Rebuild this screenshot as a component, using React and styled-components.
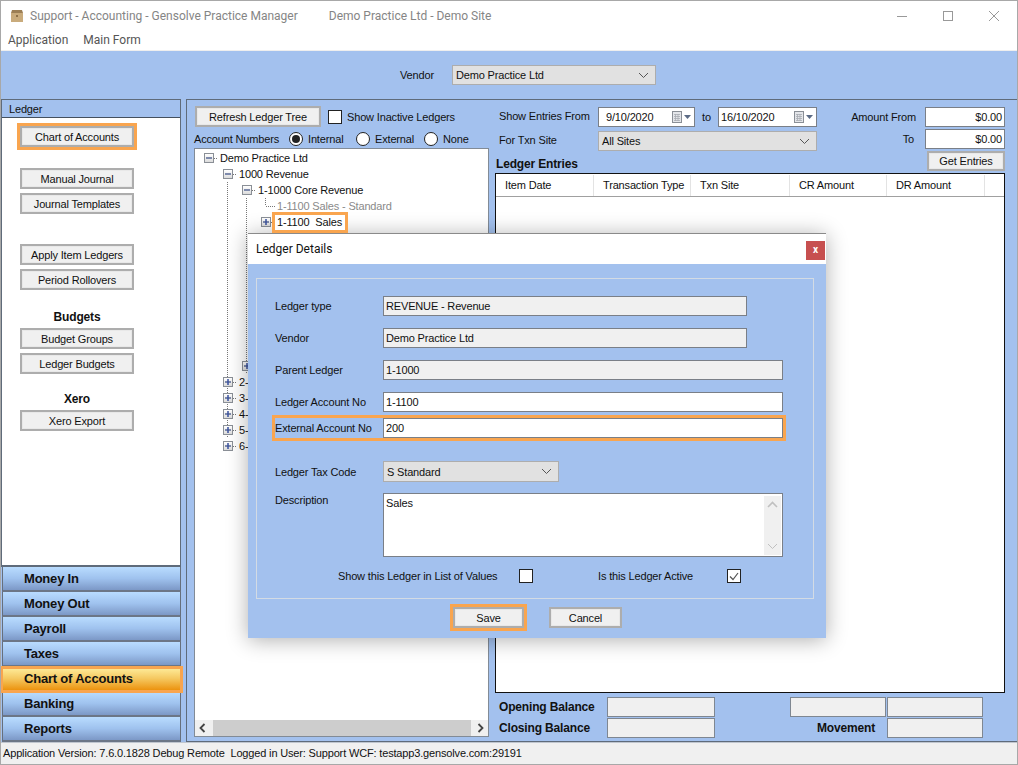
import React from "react";
import styled, { createGlobalStyle, css } from "styled-components";

const Global = createGlobalStyle`
  html, body { margin: 0; padding: 0; background: #fff; }
  body { font-family: "Liberation Sans", Arial, sans-serif; font-size: 11px; letter-spacing: -0.16px; color: #111; }
  * { box-sizing: border-box; }
`;

const BLUE = "#a3c1ee";
const ORANGE = "#f9a54f";
const highlight = css`outline: 3px solid ${ORANGE};`;

const Win = styled.div`
  position: relative; width: 1018px; height: 765px; overflow: hidden;
  display: flex; flex-direction: column;
  border: 1px solid #a8a8a8; background: ${BLUE};
`;
const TitleBar = styled.div`
  height: 29px; background: #fff; display: flex; align-items: center; font-family: Roboto, sans-serif; font-size: 12px; letter-spacing: 0;
  color: #858585; padding-left: 9px; padding-top: 1px; flex: none;
`;
const TitleText = styled.span`margin-left: ${p => p.$gap}px; white-space: nowrap;`;
const WinControls = styled.div`margin-left: auto; display: flex;`;
const WinBtn = styled.div`width: 46px; height: 29px; display: flex; align-items: center; justify-content: center; margin-top: -1px;`;
const MenuBar = styled.div`
  height: 21px; background: #fff; border-bottom: 1px solid #eee; display: flex; gap: 15px; font-family: Roboto, sans-serif; font-size: 12px; letter-spacing: 0;
  align-items: center; padding: 0 0 1px 7px; color: #555; flex: none;
`;
const VendorBar = styled.div`
  height: 48px; display: flex; align-items: center; flex: none; padding: 0 0 0 399px;
`;
const VendorLabel = styled.span`width: 52px;`;
const Main = styled.div`flex: 1; display: flex; min-height: 0;`;

const Sidebar = styled.div`width: 180px; flex: none; display: flex; flex-direction: column; margin-right: 5px;`;
const SideBody = styled.div`flex: 1; border: 1px solid #5f6b7a; border-bottom: 2px solid #5f6b7a; background: #fff; display: flex; flex-direction: column;`;
const SideHeader = styled.div`height: 18px; background: ${BLUE}; border-bottom: 1px solid #44505e; padding-left: 7px; line-height: 18px; flex: none;`;
const SideGroup = styled.div`display: flex; flex-direction: column; gap: 4px; padding-left: 18px; margin-top: ${p => p.$top}px;`;
const GroupLabel = styled.div`width: 114px; height: 16px; margin-bottom: -1px; text-align: center; font-weight: 700; font-size: 12px; line-height: 17px;`;

const Btn = styled.div`
  width: ${p => p.$w}px; height: ${p => p.$h || 21}px; flex: none;
  border: 2px solid #adadad; background: #f0f0f0;
  box-shadow: inset 0 0 0 1px #e8e8e8;
  display: flex; align-items: center; justify-content: center; white-space: nowrap;
  ${p => p.$hl && highlight}
`;

const NavList = styled.div`display: flex; flex-direction: column; padding-left: 1px; position: relative;`;
const NavItem = styled.div`
  height: 25px; position: relative; padding-left: 21px; font-weight: 700; font-size: 13px; letter-spacing: -0.2px; line-height: 23px;
  border: 1px solid #666f7c; border-top: 0; border-bottom: 2px solid #6c7686;
  background: ${p => p.$active
    ? "linear-gradient(#fff0a0, #f5c860 50%, #ec930f)"
    : "linear-gradient(#b9dcff, #9fc2ee 50%, #7c98c6)"};
  ${p => p.$active && css`
    border-color: #ec930f; z-index: 1;
    outline: 3px solid ${ORANGE}; outline-offset: -2px;
    margin: 0 -1px 0 -1px; padding-left: 22px;
  `}
`;

const Panel = styled.div`flex: 1; display: flex; border: 1px solid #5f6b7a; border-right: 0; min-width: 0;`;
const TreeCol = styled.div`width: 308px; flex: none; padding: 6px 0 4px 7px; display: flex; flex-direction: column;`;
const TreeTop = styled.div`display: flex; align-items: center; padding-left: 1px;`;
const CheckBox = styled.div`
  width: 14px; height: 14px; flex: none; border: 1px solid #222; background: #fff;
  display: flex; align-items: center; justify-content: center;
`;
const TopLabel = styled.span`margin-left: ${p => p.$ml}px; white-space: nowrap;`;
const RadioRow = styled.div`display: flex; align-items: center; height: 18px; margin-top: 3px;`;
const RadioMain = styled.span`width: 95px; flex: none; white-space: nowrap;`;
const RadioOpt = styled.div`display: flex; align-items: center; width: ${p => p.$w}px; flex: none; gap: 5px; white-space: nowrap;`;
const Radio = styled.div`
  width: 14px; height: 14px; border-radius: 50%; border: 1px solid #222; background: #fff; flex: none;
  display: flex; align-items: center; justify-content: center;
  &::after { content: ""; width: 8px; height: 8px; border-radius: 50%; background: ${p => p.$on ? "#222" : "transparent"}; }
`;
const TreeBox = styled.div`
  flex: 1; width: 295px; min-height: 0; border: 1px solid #828b96; background: #fff;
  display: flex; flex-direction: column; padding-top: 1px; overflow: hidden;
`;
const TreeRows = styled.div`flex: 1; padding-left: 4px; min-height: 0; overflow: hidden;`;
const TreeRow = styled.div`height: 16px; display: flex; align-items: center; white-space: nowrap;`;
const dots = "repeating-linear-gradient(#777 0 1px, transparent 1px 2px)";
const Cell = styled.div`
  width: 19px; height: 16px; flex: none; position: relative;
  ${p => p.$line && css`
    background-image: ${dots}; background-size: 1px 100%; background-repeat: no-repeat; background-position: 9px 0;
  `}
`;
const Leaf = styled(Cell)`
  background-image: ${dots}, repeating-linear-gradient(90deg, #777 0 1px, transparent 1px 2px);
  background-size: 1px 8px, 9px 1px; background-repeat: no-repeat; background-position: 9px 0, 10px 8px;
`;
const Exp = styled(Cell)`
  display: flex; align-items: center; justify-content: flex-start; padding-left: 5px;
  &::after {
    content: ""; position: absolute; left: 15px; top: 8px; width: 4px; height: 1px;
    background: repeating-linear-gradient(90deg, #777 0 1px, transparent 1px 2px);
  }
`;
const ExpBox = styled.div`
  width: 10px; height: 10px; border: 1px solid #8a8f96; background: linear-gradient(#fff, #dcdcdc);
  position: relative;
  &::before { content: ""; position: absolute; left: 1px; top: 3px; width: 6px; height: 2px; background: #5a6a96; transform: scaleY(.75); }
  ${p => p.$plus && css`
    &::after { content: ""; position: absolute; left: 3px; top: 1px; width: 2px; height: 6px; background: #3a52a0; transform: scaleX(.75); }
  `}
`;
const NodeText = styled.span`
  padding-left: 2px; color: ${p => p.$dim ? "#8a8a8a" : "#111"};
  ${p => p.$hl && css`${highlight}; padding: 0 3px 0 2px; height: 15px; line-height: 15px; white-space: pre; background: #fff; position: relative; z-index: 1;`}
`;
const HScroll = styled.div`
  height: 16px; flex: none; background: #f0f0f0; display: flex; align-items: center; justify-content: space-between;
  padding: 0 4px; position: relative;
`;
const HThumb = styled.div`position: absolute; left: 18px; right: 17px; top: 0; bottom: 0; background: #cdcdcd;`;

const EntriesCol = styled.div`flex: 1; display: flex; flex-direction: column; min-width: 0; padding-right: 12px;`;
const FilterArea = styled.div`display: flex; padding: 7px 0 0 4px; height: 73px; flex: none;`;
const FilterLeft = styled.div`width: 318px; display: flex; flex-direction: column; gap: 4px;`;
const FilterRow = styled.div`display: flex; align-items: center; height: 20px;`;
const FilterLabel = styled.span`width: 99px; flex: none; padding-bottom: 2px; white-space: nowrap;`;
const ToLabel = styled.span`width: 23px; flex: none; text-align: center;`;
const DateBox = styled.div`
  width: ${p => p.$w}px; height: 20px; border: 1px solid #7a7f87; background: #fff; flex: none;
  display: flex; align-items: center; justify-content: space-between; padding: 0 2px 0 ${p => p.$pl}px;
`;
const SelectBox = styled.div`
  width: ${p => p.$w}px; height: ${p => p.$h || 20}px; flex: none; background: #e1e1e1; border: 1px solid #adadad;
  display: flex; align-items: center; justify-content: space-between; padding: 0 6px 0 3px;
`;
const SectionTitle = styled.div`font-weight: 700; margin: 1px 0 0 -3px; line-height: 16px; font-size: 12px;`;
const FilterRight = styled.div`margin-left: auto; display: flex; flex-direction: column; align-items: flex-end; gap: 2px;`;
const AmountRow = styled.div`display: flex; align-items: center; gap: ${p => p.$gap}px; height: 20px;`;
const Amount = styled.div`width: 80px; height: 20px; border: 1px solid #7a7f87; background: #fff; text-align: right; padding-right: 2px; line-height: 18px;`;
const EntriesTable = styled.div`flex: 1; min-height: 0; border: 1px solid #111; background: #fff; padding-top: 1px;`;
const THead = styled.div`display: flex; height: 22px; border-bottom: 1px solid #a0a0a0;`;
const TH = styled.div`
  width: ${p => p.$w}px; flex: none; border-right: 1px solid #e3e3e3; padding-left: 9px; line-height: 21px; white-space: nowrap;
`;
const Balances = styled.div`
  display: grid; grid-template-columns: 108px 108px 75px 97px 96px; grid-auto-rows: 20px; row-gap: 1px;
  padding: 4px 0 3px 4px; flex: none; align-items: center;
`;
const BalLabel = styled.div`font-weight: 700; white-space: nowrap; font-size: 12px; ${p => p.$right && css`grid-column: span 2; text-align: right; padding-right: 12px;`}`;
const BalBox = styled.div`width: ${p => p.$w}px; height: 20px; border: 1px solid #7f8791; background: #f0f0f0;`;
const Spacer = styled.div``;

const StatusBar = styled.div`height: 22px; background: #f0f0f0; flex: none; padding-left: 2px; line-height: 21px; white-space: pre; border-top: 1px solid #c0c6cf;`;

const Dialog = styled.div`
  position: absolute; left: 247px; top: 232px; width: 578px; height: 405px; background: ${BLUE};
  box-shadow: 0 2px 20px rgba(0,0,0,.32); border-top: 1px solid #8a8a8a;
  display: flex; flex-direction: column;
`;
const DlgTitle = styled.div`
  height: 30px; background: #fff; flex: none; display: flex; align-items: center; padding: 0 1px 0 8px; justify-content: space-between;
  font-family: Roboto, sans-serif; font-size: 12px; letter-spacing: 0;
`;
const DlgClose = styled.div`
  width: 19px; height: 19px; background: #c75050; color: #fff; font-weight: 700; font-size: 10px; line-height: 17px; text-align: center; margin-top: 3px;
`;
const DlgGroup = styled.div`
  margin: 14px 12px 0 8px; height: 321px; border: 1px solid #d3dbe4; padding: 17px 30px 0 18px;
  display: flex; flex-direction: column; flex: none;
`;
const DlgRow = styled.div`
  display: grid; grid-template-columns: 108px 1fr; align-items: ${p => p.$top ? "start" : "center"}; margin-top: ${p => p.$mt || 0}px;
  ${p => p.$hl && highlight}
`;
const DlgLabel = styled.div`white-space: nowrap; ${p => p.$top && css`padding-top: 1px;`}`;
const Field = styled.div`
  width: ${p => p.$w}px; height: 20px; border: 1px solid #7a7f87; background: ${p => p.$ro ? "#f0f0f0" : "#fff"};
  padding-left: 2px; line-height: 18px; white-space: nowrap;
`;
const TextArea = styled.div`
  width: 400px; height: 64px; border: 1px solid #7a7f87; background: #fff; display: flex; justify-content: space-between;
  padding: 2px 1px 1px 2px; line-height: 15px;
`;
const VScroll = styled.div`width: 17px; background: #f0f0f0; display: flex; flex-direction: column; justify-content: space-between; align-items: center; padding: 5px 0;`;
const CheckRow = styled.div`
  display: grid; grid-template-columns: 181px 79px 129px 14px; padding-left: 63px; align-items: center; height: 14px; margin-top: 12px;
`;
const DlgButtons = styled.div`display: flex; align-items: center; padding-left: 205px; margin-top: 8px; gap: 25px;`;

const Chevron = ({ c = "#555", w = 11 }) => (
  <svg width={w} height="7" viewBox="0 0 11 7"><path d="M1 1l4.5 4.5L10 1" fill="none" stroke={c} strokeWidth="1" /></svg>
);
const Cal = () => (
  <svg width="20" height="12" viewBox="0 0 20 12">
    <rect x=".5" y=".5" width="9" height="11" fill="#e4e6ea" stroke="#8a8f96" />
    <path d="M2 3.5h6M2 5.5h6M2 7.5h6M2 9.5h6M3.5 3v7M6 3v7" stroke="#a8acb2" strokeWidth=".8" />
    <path d="M12 4h7l-3.500 4z" fill="#5c6b85" />
  </svg>
);

const leftBtns = [
  { top: 8, items: [{ t: "Chart of Accounts", hl: true }] },
  { top: 21, items: [{ t: "Manual Journal" }, { t: "Journal Templates" }] },
  { top: 30, items: [{ t: "Apply Item Ledgers" }, { t: "Period Rollovers" }] },
  { top: 19, label: "Budgets", items: [{ t: "Budget Groups" }, { t: "Ledger Budgets" }] },
  { top: 17, label: "Xero", items: [{ t: "Xero Export" }] },
];
const navs = ["Money In", "Money Out", "Payroll", "Taxes", "Chart of Accounts", "Banking", "Reports"];
const hiddenRows = [5, 6, 7, 8, 9, 10, 11, 12];

const Node = ({ lines = [], kind, text, dim, hl, through }) => (
  <TreeRow>
    {lines.map((l, i) => <Cell key={i} $line={l} />)}
    {kind === "leaf" ? <Leaf /> : <Exp $line={through}><ExpBox $plus={kind === "plus"} /></Exp>}
    {text && <NodeText $dim={dim} $hl={hl}>{text}</NodeText>}
  </TreeRow>
);

export default function App() {
  return (
    <>
      <Global />
      <Win>
        <TitleBar>
          <svg width="14" height="14" viewBox="0 0 14 14">
            <path d="M1 4h12v9H1z" fill="#c9ab7c" />
            <path d="M2 1h10l1 3H1z" fill="#9c7f55" />
            <path d="M6 6h2v2H6z" fill="#8d7048" />
          </svg>
          <TitleText $gap={6}>Support - Accounting - Gensolve Practice Manager</TitleText>
          <TitleText $gap={31}>Demo Practice Ltd - Demo Site</TitleText>
          <WinControls>
            <WinBtn><svg width="10" height="10" viewBox="0 0 10 10"><path d="M0 5.500h10" stroke="#999" /></svg></WinBtn>
            <WinBtn><svg width="10" height="10" viewBox="0 0 10 10"><rect x=".5" y=".5" width="9" height="9" fill="none" stroke="#999" /></svg></WinBtn>
            <WinBtn><svg width="10" height="10" viewBox="0 0 10 10"><path d="M0 0l10 10M10 0L0 10" stroke="#999" /></svg></WinBtn>
          </WinControls>
        </TitleBar>
        <MenuBar><span>Application</span><span>Main Form</span></MenuBar>
        <VendorBar>
          <VendorLabel>Vendor</VendorLabel>
          <SelectBox $w={204}>Demo Practice Ltd<Chevron /></SelectBox>
        </VendorBar>
        <Main>
          <Sidebar>
            <SideBody>
              <SideHeader>Ledger</SideHeader>
              {leftBtns.map((g, i) => (
                <SideGroup key={i} $top={g.top}>
                  {g.label && <GroupLabel>{g.label}</GroupLabel>}
                  {g.items.map(b => <Btn key={b.t} $w={114} $hl={b.hl}>{b.t}</Btn>)}
                </SideGroup>
              ))}
            </SideBody>
            <NavList>
              {navs.map(n => <NavItem key={n} $active={n === "Chart of Accounts"}>{n}</NavItem>)}
            </NavList>
          </Sidebar>
          <Panel>
            <TreeCol>
              <TreeTop>
                <Btn $w={126}>Refresh Ledger Tree</Btn>
                <TopLabel $ml={7}><CheckBox /></TopLabel>
                <TopLabel $ml={5}>Show Inactive Ledgers</TopLabel>
              </TreeTop>
              <RadioRow>
                <RadioMain>Account Numbers</RadioMain>
                <RadioOpt $w={67}><Radio $on />Internal</RadioOpt>
                <RadioOpt $w={68}><Radio />External</RadioOpt>
                <RadioOpt $w={60}><Radio />None</RadioOpt>
              </RadioRow>
              <TreeBox>
                <TreeRows>
                  <Node kind="minus" text="Demo Practice Ltd" />
                  <Node lines={[false]} kind="minus" text="1000 Revenue" />
                  <Node lines={[false, true]} kind="minus" text="1-1000 Core Revenue" />
                  <Node lines={[false, true, true]} kind="leaf" text="1-1100 Sales - Standard" dim />
                  <Node lines={[false, true, true]} kind="plus" text="1-1100  Sales" hl />
                  {hiddenRows.map(k => <Node key={k} lines={[false, true, true]} kind="plus" />)}
                  <Node lines={[false, true]} kind="plus" through />
                  {["2-", "3-", "4-", "5-", "6-"].map((t, i) => <Node key={t} lines={[false]} kind="plus" text={t} through={i < 4} />)}
                </TreeRows>
                <HScroll>
                  <HThumb />
                  <svg width="7" height="10" viewBox="0 0 7 10"><path d="M5.500 1L1.500 5l4 4" fill="none" stroke="#444" strokeWidth="1.800" /></svg>
                  <svg width="7" height="10" viewBox="0 0 7 10"><path d="M1.500 1l4 4-4 4" fill="none" stroke="#444" strokeWidth="1.800" /></svg>
                </HScroll>
              </TreeBox>
            </TreeCol>
            <EntriesCol>
              <FilterArea>
                <FilterLeft>
                  <FilterRow>
                    <FilterLabel>Show Entries From</FilterLabel>
                    <DateBox $w={97} $pl={7}>9/10/2020<Cal /></DateBox>
                    <ToLabel>to</ToLabel>
                    <DateBox $w={99} $pl={2}>16/10/2020<Cal /></DateBox>
                  </FilterRow>
                  <FilterRow>
                    <FilterLabel>For Txn Site</FilterLabel>
                    <SelectBox $w={219}>All Sites<Chevron /></SelectBox>
                  </FilterRow>
                  <SectionTitle>Ledger Entries</SectionTitle>
                </FilterLeft>
                <FilterRight>
                  <AmountRow $gap={9}><span>Amount From</span><Amount>$0.00</Amount></AmountRow>
                  <AmountRow $gap={11}><span>To</span><Amount>$0.00</Amount></AmountRow>
                  <Btn $w={78} $h={20}>Get Entries</Btn>
                </FilterRight>
              </FilterArea>
              <EntriesTable>
                <THead>
                  <TH $w={98}>Item Date</TH>
                  <TH $w={97}>Transaction Type</TH>
                  <TH $w={99}>Txn Site</TH>
                  <TH $w={97}>CR Amount</TH>
                  <TH $w={98}>DR Amount</TH>
                </THead>
              </EntriesTable>
              <Balances>
                <BalLabel>Opening Balance</BalLabel>
                <BalBox $w={108} />
                <Spacer />
                <BalBox $w={96} />
                <BalBox $w={96} />
                <BalLabel>Closing Balance</BalLabel>
                <BalBox $w={108} />
                <BalLabel $right>Movement</BalLabel>
                <BalBox $w={96} />
              </Balances>
            </EntriesCol>
          </Panel>
        </Main>
        <StatusBar>Application Version: 7.6.0.1828 Debug Remote  Logged in User: Support WCF: testapp3.gensolve.com:29191</StatusBar>

        <Dialog>
          <DlgTitle>
            <span>Ledger Details</span>
            <DlgClose>x</DlgClose>
          </DlgTitle>
          <DlgGroup>
            <DlgRow><DlgLabel>Ledger type</DlgLabel><Field $w={364} $ro>REVENUE - Revenue</Field></DlgRow>
            <DlgRow $mt={12}><DlgLabel>Vendor</DlgLabel><Field $w={364} $ro>Demo Practice Ltd</Field></DlgRow>
            <DlgRow $mt={12}><DlgLabel>Parent Ledger</DlgLabel><Field $w={400} $ro>1-1000</Field></DlgRow>
            <DlgRow $mt={12}><DlgLabel>Ledger Account No</DlgLabel><Field $w={400}>1-1100</Field></DlgRow>
            <DlgRow $mt={6} $hl><DlgLabel>External Account No</DlgLabel><Field $w={400}>200</Field></DlgRow>
            <DlgRow $mt={23}><DlgLabel>Ledger Tax Code</DlgLabel><SelectBox $w={176} $h={21}>S Standard<Chevron /></SelectBox></DlgRow>
            <DlgRow $mt={11} $top>
              <DlgLabel $top>Description</DlgLabel>
              <TextArea>
                <span>Sales</span>
                <VScroll>
                  <svg width="11" height="7" viewBox="0 0 11 7"><path d="M1 6l4.500-4.500L10 6" fill="none" stroke="#c0c0c0" strokeWidth="1.600" /></svg>
                  <Chevron c="#c0c0c0" />
                </VScroll>
              </TextArea>
            </DlgRow>
            <CheckRow>
              <span>Show this Ledger in List of Values</span>
              <CheckBox />
              <span>Is this Ledger Active</span>
              <CheckBox>
                <svg width="10" height="9" viewBox="0 0 10 9"><path d="M1 4.500l3 3L9 1" fill="none" stroke="#555" strokeWidth="1.200" /></svg>
              </CheckBox>
            </CheckRow>
          </DlgGroup>
          <DlgButtons>
            <Btn $w={71} $hl>Save</Btn>
            <Btn $w={73}>Cancel</Btn>
          </DlgButtons>
        </Dialog>
      </Win>
    </>
  );
}
